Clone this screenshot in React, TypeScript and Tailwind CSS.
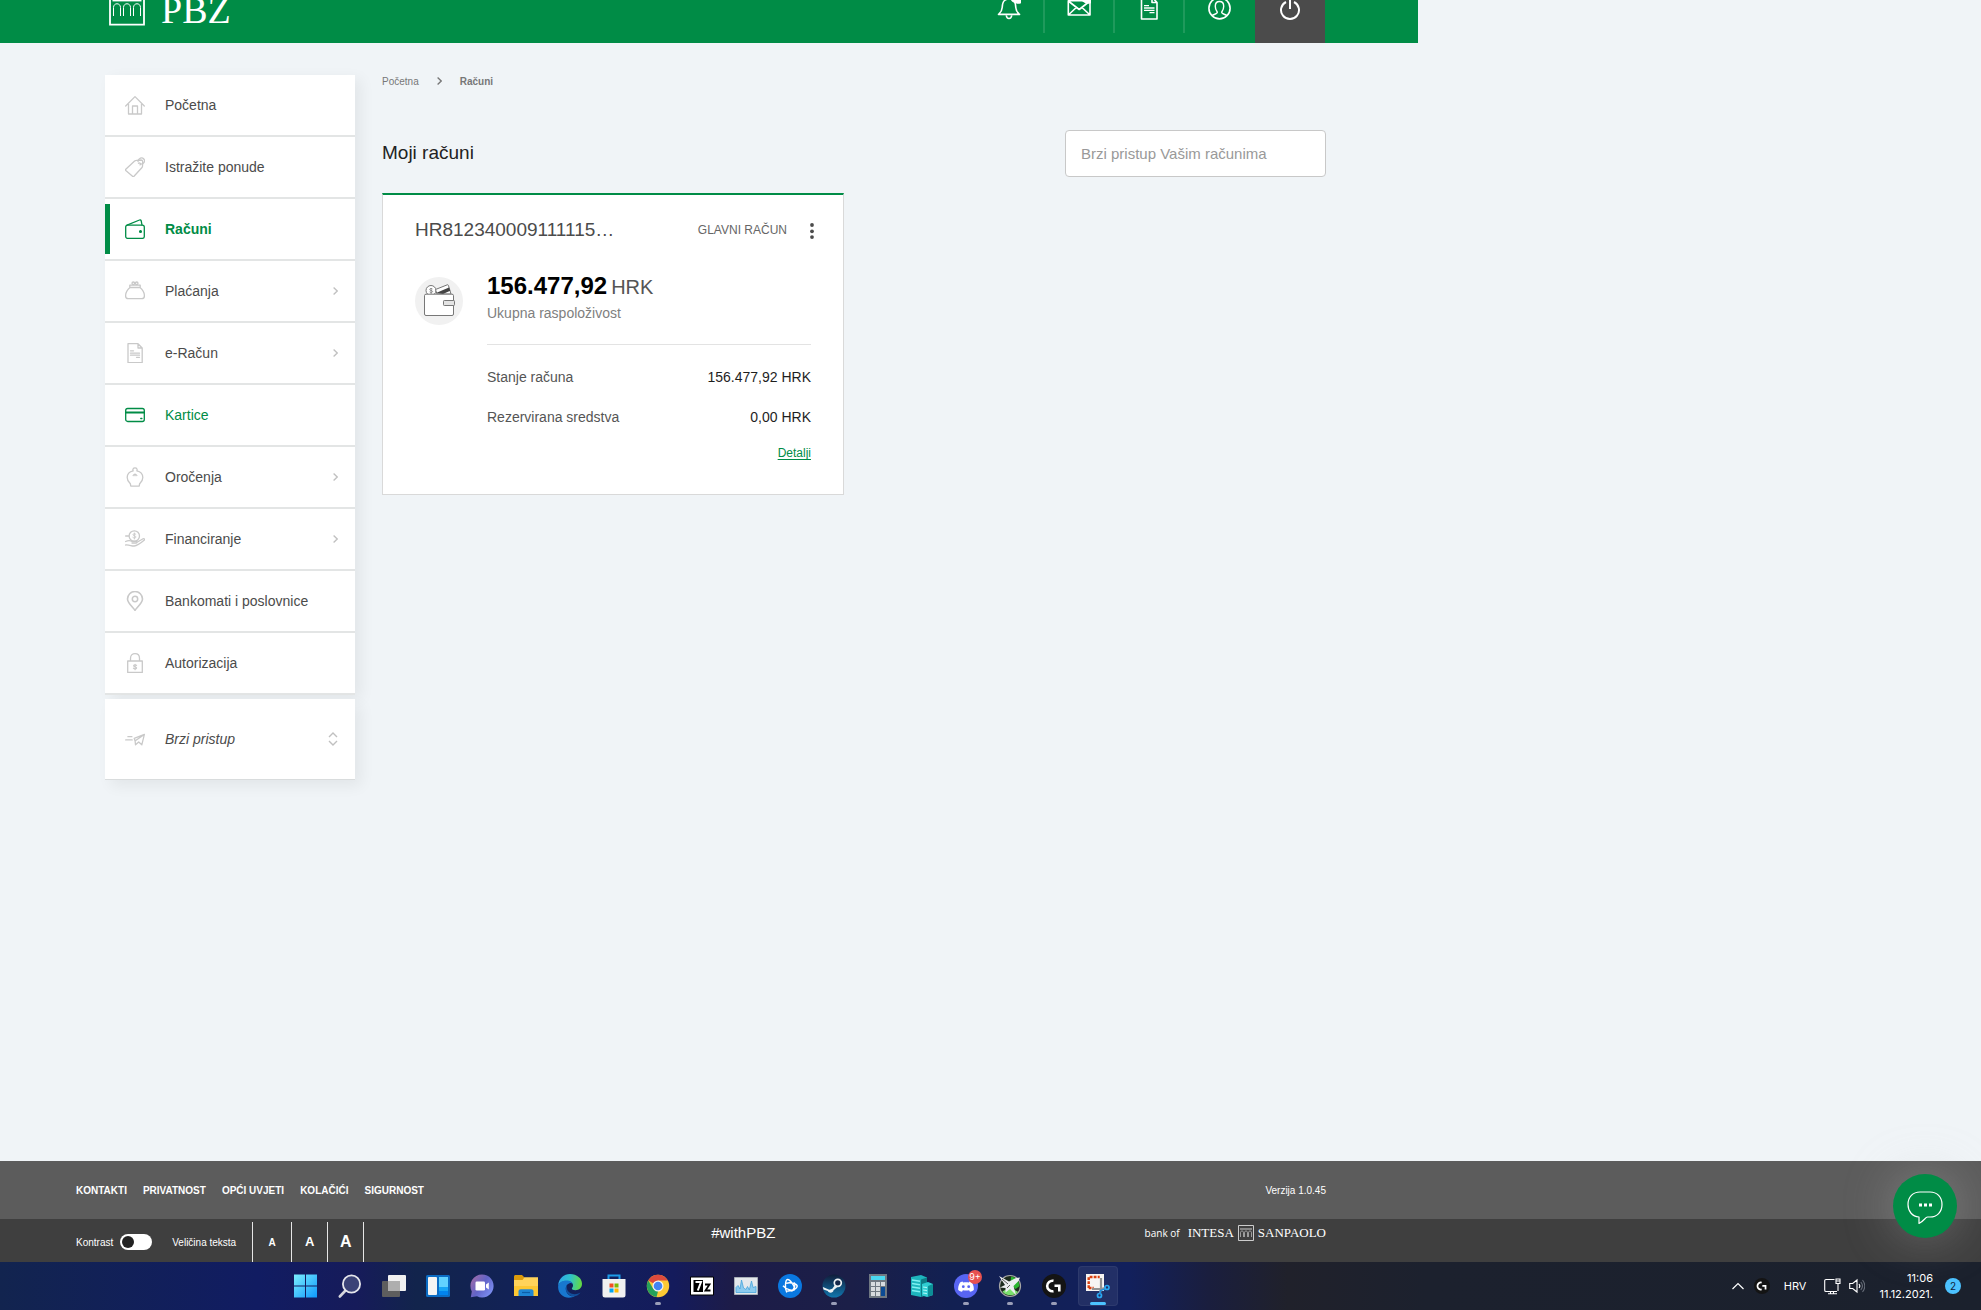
import type { ReactNode } from "react";
import { clsx } from "clsx";

/* ---------- Sidebar icons (20x20, stroke follows text colour) ---------- */

function LineIcon({ children }: { children: ReactNode }) {
  return (
    <svg
      viewBox="0 0 20 20"
      className="size-5 shrink-0"
      fill="none"
      stroke="currentColor"
      strokeWidth="1.3"
      strokeLinecap="round"
      strokeLinejoin="round"
      aria-hidden="true"
    >
      {children}
    </svg>
  );
}

const HomeIcon = (
  <LineIcon>
    <path d="M.7 11 10 1.6 19.3 11M3.5 9v10h13V9M7.5 19v-8h5v8" />
  </LineIcon>
);

const TagIcon = (
  <LineIcon>
    <path d="M.8 12.3 9.6 4c.5-.5 1-.7 1.700-.7l4.700-.3c.9 0 1.600.6 1.700 1.500l-.2 4.700c0 .6-.3 1.100-.7 1.500L9 19.200c-.5.5-1 .5-1.500 0L.8 13.500c-.4-.4-.4-.8 0-1.200z" />
    <path d="M13.500 6.200c1-.8 2.600.6 1.600 1.700M13 4.500C13.500 1 17 0 18.800 2s.2 5.500-3.600 5" />
  </LineIcon>
);

const WalletIcon = (
  <LineIcon>
    <rect x=".7" y="6.200" width="18.600" height="13.200" rx="2" />
    <path d="M2 6.200 14.500 1c.8-.3 1.400 0 1.700.8l.8 4.200" />
    <circle cx="15.500" cy="12.500" r=".9" fill="currentColor" />
  </LineIcon>
);

const PurseIcon = (
  <LineIcon>
    <path d="M5 6.500h10c2.500 2 4.400 5 4.400 8.500 0 1.800-.9 2.700-2.700 2.700H3.300c-1.800 0-2.700-.9-2.700-2.700C.6 11.500 2.500 8.500 5 6.500zM4.800 4.200h10.400v2.300H4.800z" />
    <circle cx="8.300" cy="2.300" r="1.300" />
    <circle cx="11.700" cy="2.300" r="1.300" />
  </LineIcon>
);

const DocumentIcon = (
  <LineIcon>
    <path d="M3 .7h10L17.200 5v14.600H3zM13 .7V5h4.200M5.500 7.800h3M5.500 10.200h9M5.500 12.200h9M11.500 14.300h3" />
  </LineIcon>
);

const CardIcon = (
  <LineIcon>
    <rect x=".7" y="3.500" width="18.600" height="13" rx="2" />
    <path d="M.7 7.500h18.600" strokeWidth="1.800" />
    <path d="M15.800 13.500h1" strokeWidth="1.500" />
  </LineIcon>
);

const PiggyIcon = (
  <LineIcon>
    <path d="M8.200 3.800c-.8-1-.2-3 1.800-3s2.600 2 1.800 3c3.800.8 6 3.500 6 6.700 0 3-1.600 4.500-2.800 5.800-.7.8-.5 1.700-.8 2.900H5.800c-.3-1.200-.1-2.100-.8-2.900-1.200-1.300-2.800-2.800-2.800-5.800 0-3.200 2.200-5.900 6-6.700z" />
    <path d="M8 8.300c.8-1.800 3.200-1.800 4 0z" fill="currentColor" strokeWidth=".8" />
  </LineIcon>
);

const LoanIcon = (
  <LineIcon>
    <circle cx="9.300" cy="7" r="5.200" />
    <path
      d="M10.800 5.200c-.9-.8-2.800-.6-2.800.5 0 1.400 3 .8 3 2.300 0 1.200-2.200 1.400-3.200.4M9.400 4v6"
      strokeWidth=".9"
    />
    <path d="M.6 7h3M.6 12.500c3-1.600 4.800-1 6.500-.2h4c1.300.1 1.300 1.700 0 1.700H7M12.500 13l5.600-3.200c1.200-.5 2 .6 1 1.500-3.300 2.800-6.800 5.500-9.900 5.700-2.800.2-4.700-1.400-8.600-1" />
  </LineIcon>
);

const PinIcon = (
  <LineIcon>
    <path
      d="M10 19.300C8.200 16.500 2.500 12 2.500 8a7.500 7.500 0 0 1 15 0c0 4-5.700 8.500-7.500 11.300z"
      strokeWidth="1.600"
    />
    <circle cx="10" cy="8" r="2.700" strokeWidth="1.500" />
  </LineIcon>
);

const LockIcon = (
  <LineIcon>
    <path d="M2.700 8h14.600v11.500H2.700zM5.500 8V5.200c0-6 9-6 9 0V8" />
    <path
      d="M11.600 12.300c-.8-.8-3-.7-3 .4 0 1.400 3 .8 3 2.200 0 1.200-2.300 1.300-3.200.3M10.100 11.200v5.500"
      strokeWidth="1.100"
    />
  </LineIcon>
);

const SendIcon = (
  <LineIcon>
    <path d="m9.200 9.300 10.200-4-2.600 10.500-3.100-2.800-3.200 2.800-.4-3.800zM19 5.600l-8.700 6.200M2.900 7.700h4M.7 10.900h6.500" />
  </LineIcon>
);

const NAV_ITEMS = [
  { label: "Početna", icon: HomeIcon },
  { label: "Istražite ponude", icon: TagIcon },
  { label: "Računi", icon: WalletIcon, active: true },
  { label: "Plaćanja", icon: PurseIcon, expandable: true },
  { label: "e-Račun", icon: DocumentIcon, expandable: true },
  { label: "Kartice", icon: CardIcon, hovered: true },
  { label: "Oročenja", icon: PiggyIcon, expandable: true },
  { label: "Financiranje", icon: LoanIcon, expandable: true },
  { label: "Bankomati i poslovnice", icon: PinIcon },
  { label: "Autorizacija", icon: LockIcon },
];

/* ---------- Top bar ---------- */

function TopIcon({ children }: { children: ReactNode }) {
  return (
    <svg
      viewBox="0 0 24 24"
      className="size-6"
      fill="none"
      stroke="#fff"
      strokeWidth="1.600"
      strokeLinejoin="round"
      aria-hidden="true"
    >
      {children}
    </svg>
  );
}

const TOP_ACTIONS = [
  {
    label: "Obavijesti",
    divider: true,
    icon: (
      <TopIcon>
        <path d="M1.500 14.400C3.500 12.600 5 11.500 5.200 7.500 5.400 2.500 6.500-1 12-1s6.600 3.500 6.800 8.500c.2 4 1.700 5.100 3.700 6.900zM9.300 15.500c.5 4 4.900 4 5.400 0" />
        <circle cx="20.800" cy="-4.200" r="8" fill="#fff" stroke="none" />
      </TopIcon>
    ),
  },
  {
    label: "Poruke",
    divider: true,
    icon: (
      <TopIcon>
        <path d="M1.300.800H23V15H1.300zM1.300 1l10.900 8.500L23 1M1.300 15l8-7.500M23 15l-8-7.500" />
        <circle cx="21.300" cy="-4.200" r="8" fill="#fff" stroke="none" />
      </TopIcon>
    ),
  },
  {
    label: "Dokumenti",
    divider: true,
    icon: (
      <TopIcon>
        <path d="M4.500-3H15l5 5.500V19H4.500zM15-3v5.500h5" />
        <path d="M7 5.600h5M7 8h10.500M7 10.300h10.500M12.500 12.600h5" strokeWidth="1.300" />
      </TopIcon>
    ),
  },
  {
    label: "Profil",
    divider: false,
    icon: (
      <TopIcon>
        <circle cx="12.500" cy="8.300" r="10.600" />
        <path
          d="M5 15.800c1.500-1.800 5.700-1.500 5.300-3.600-.2-1-2-2.500-2-6 0-3 1.700-4.700 4.200-4.700s4.200 1.700 4.200 4.700c0 3.500-1.800 5-2 6-.4 2.100 3.800 1.800 5.300 3.600"
          strokeWidth="1.400"
        />
      </TopIcon>
    ),
  },
];

function TopBar() {
  return (
    <header className="h-[43px] w-full max-w-[1418px] overflow-hidden bg-[#008c46]">
      <div className="ml-[105px] flex h-full max-w-[1220px] items-start justify-between">
        <a href="#" className="ml-1 flex gap-4" aria-label="PBZ">
          <svg viewBox="0 0 36 26" className="h-[26px] w-9" fill="none" stroke="#fff" aria-hidden="true">
            <path d="M1-4v28.700h34V-4" strokeWidth="1.800" />
            <path d="M3.500.600h29" strokeWidth="1.600" />
            <path
              d="M4.500 16V7.500c0-5 7-5 7 0V16M14.500 16V7.500c0-5 7-5 7 0V16M24.500 16V7.500c0-5 7-5 7 0V16"
              strokeWidth="1"
            />
          </svg>
          <span className="font-['Liberation_Serif',serif] text-[38px] leading-5 text-white">PBZ</span>
        </a>
        <div className="flex h-full">
          {TOP_ACTIONS.map((action) => (
            <button
              key={action.label}
              type="button"
              aria-label={action.label}
              className={clsx(
                "flex h-[33px] w-[70px] items-start justify-center border-r-2",
                action.divider ? "border-[#1f9a5c]" : "border-transparent"
              )}
            >
              {action.icon}
            </button>
          ))}
          <button
            type="button"
            aria-label="Odjava"
            className="flex h-full w-[70px] items-start justify-center bg-[#4b4b4b]"
          >
            <svg viewBox="0 0 24 24" className="size-6" fill="none" stroke="#fff" strokeWidth="2" aria-hidden="true">
              <path d="M8 2A9 9 0 1 0 16 2M12-2V9" />
            </svg>
          </button>
        </div>
      </div>
    </header>
  );
}

/* ---------- Sidebar ---------- */

function Sidebar() {
  return (
    <aside className="w-[250px] shrink-0 text-sm text-[#4b4b4b]">
      <nav className="shadow-[6px_4px_14px_rgba(0,0,0,0.06)]">
        <ul>
          {NAV_ITEMS.map((item) => (
            <li key={item.label} className="border-b-2 border-[#e3e5e5] bg-white">
              <a href="#" className="flex h-[60px] items-center pr-[17px]">
                <span className={clsx("mr-[15px] h-[50px] w-[5px]", item.active && "bg-[#008c46]")} />
                <span className={item.active || item.hovered ? "text-[#008c46]" : "text-[#c9c9c9]"}>
                  {item.icon}
                </span>
                <span
                  className={clsx(
                    "ml-5",
                    item.active && "font-bold",
                    (item.active || item.hovered) && "text-[#008c46]"
                  )}
                >
                  {item.label}
                </span>
                {item.expandable && (
                  <svg
                    viewBox="0 0 5 8"
                    className="ml-auto h-2 w-[5px]"
                    fill="none"
                    stroke="#c0c0c0"
                    strokeWidth="1.300"
                    aria-hidden="true"
                  >
                    <path d="m.6.500 3.600 3.500L.6 7.500" />
                  </svg>
                )}
              </a>
            </li>
          ))}
        </ul>
      </nav>
      <button
        type="button"
        className="mt-1 flex h-[81px] w-full items-center border-b border-[#d9dcdd] bg-white pr-[17px] pl-5 shadow-[6px_6px_14px_rgba(0,0,0,0.06)]"
      >
        <span className="text-[#c9c9c9]">{SendIcon}</span>
        <span className="ml-5 italic">Brzi pristup</span>
        <svg
          viewBox="0 0 10 14"
          className="ml-auto h-3.5 w-2.5"
          fill="none"
          stroke="#c0c0c0"
          strokeWidth="1.400"
          aria-hidden="true"
        >
          <path d="m1 5 4-4 4 4M1 9l4 4 4-4" />
        </svg>
      </button>
    </aside>
  );
}

/* ---------- Account card ---------- */

const BALANCES = [
  { label: "Stanje računa", value: "156.477,92 HRK" },
  { label: "Rezervirana sredstva", value: "0,00 HRK" },
];

function AccountCard() {
  return (
    <section className="mt-4 max-w-[462px] border border-t-2 border-[#d9d9d9] border-t-[#008c46] bg-white px-8 pt-[23px] pb-[33px]">
      <div className="flex h-6 items-center">
        <h2 className="text-[19px] text-[#4b4b4b]">HR812340009111115…</h2>
        <span className="ml-auto text-xs text-[#666]">GLAVNI RAČUN</span>
        <button type="button" aria-label="Opcije računa" className="-mr-[3px] ml-[23px]">
          <svg viewBox="0 0 4 18" className="h-[18px] w-1" fill="#4b4b4b" aria-hidden="true">
            <circle cx="2" cy="4" r="1.900" />
            <circle cx="2" cy="10.300" r="1.900" />
            <circle cx="2" cy="16.100" r="1.900" />
          </svg>
        </button>
      </div>

      <div className="mt-7 flex gap-6">
        <svg viewBox="0 0 48 48" className="mt-[7px] size-12 shrink-0" fill="none" aria-hidden="true">
          <circle cx="24" cy="24" r="24" fill="#f1f1f1" />
          <circle cx="16" cy="13.500" r="5" fill="#fff" stroke="#777" />
          <path
            d="M17.500 12c-.8-.8-2.800-.6-2.800.5 0 1.200 2.900.8 2.900 2 0 1.100-2.200 1.200-3 .3M16.100 11v6"
            stroke="#777"
            strokeWidth=".8"
          />
          <path d="m20.500 12.500 11.800-4.700c.6-.2.900 0 1.100.5L36 17H22z" fill="#fff" stroke="#777" />
          <path d="M21 16 34 10.500l1.200 3.200-7.200 3.300z" fill="#444" />
          <rect x="9.500" y="17.200" width="29" height="21.300" rx="1.500" fill="#fff" stroke="#777" />
          <rect x="28.500" y="23.500" width="11" height="5" rx=".8" fill="#e3e3e3" stroke="#777" />
        </svg>

        <div className="flex-1">
          <p className="text-2xl leading-8 font-bold text-black">
            156.477,92<span className="ml-1 text-xl leading-8 font-normal text-[#555]">HRK</span>
          </p>
          <p className="text-sm text-[#808080]">Ukupna raspoloživost</p>

          <dl className="mt-[21px] flex flex-col gap-5 border-t border-[#e3e3e3] pt-[22px] text-sm">
            {BALANCES.map((row) => (
              <div key={row.label} className="flex justify-between">
                <dt className="text-[#555]">{row.label}</dt>
                <dd className="text-[#1e1e1e]">{row.value}</dd>
              </div>
            ))}
          </dl>

          <div className="mt-[18px] text-right text-xs">
            <a href="#" className="text-[#008c46] underline underline-offset-2">
              Detalji
            </a>
          </div>
        </div>
      </div>
    </section>
  );
}

/* ---------- Footer ---------- */

const FOOTER_LINKS = ["KONTAKTI", "PRIVATNOST", "OPĆI UVJETI", "KOLAČIĆI", "SIGURNOST"];

function Footer() {
  return (
    <footer className="text-[10px] text-white">
      <div className="bg-[#5c5c5c]">
        <div className="ml-[76px] flex h-[58px] max-w-[1250px] items-center justify-between">
          <ul className="flex gap-4 font-bold">
            {FOOTER_LINKS.map((label) => (
              <li key={label}>
                <a href="#">{label}</a>
              </li>
            ))}
          </ul>
          <span>Verzija 1.0.45</span>
        </div>
      </div>
      <div className="bg-[#3f3f3f]">
        <div className="ml-[76px] flex h-[43px] max-w-[1250px]">
          <div className="flex items-center pt-[3px]">
            <label htmlFor="contrast">Kontrast</label>
            <input
              id="contrast"
              type="checkbox"
              role="switch"
              className="ml-[7px] h-4 w-8 appearance-none rounded-full bg-white before:m-0.5 before:block before:size-3 before:rounded-full before:bg-[#222]"
            />
            <span className="ml-5">Veličina teksta</span>
          </div>
          <div className="mt-[3px] ml-4 flex border-l border-[#e5e5e5] font-bold">
            <button type="button" aria-label="Mali tekst" className="w-[39px] border-r border-[#e5e5e5] text-[10px]">
              A
            </button>
            <button type="button" aria-label="Srednji tekst" className="w-9 border-r border-[#e5e5e5] text-[13px]">
              A
            </button>
            <button type="button" aria-label="Veliki tekst" className="w-9 border-r border-[#e5e5e5] text-base">
              A
            </button>
          </div>
          <span className="mt-1 ml-[347px] text-[15px] leading-5">#withPBZ</span>
          <div className="mt-1 ml-auto flex h-5 items-center font-['Liberation_Serif',serif] text-[13px]">
            <span className="mr-2 font-['Open_Sans',sans-serif] text-[10px]">bank of</span>
            <span>INTESA</span>
            <svg viewBox="0 0 16 16" className="mx-1 size-4" fill="none" stroke="#ddd" aria-hidden="true">
              <path d="M.5.500h15v15H.5zM2 4h12" strokeWidth=".9" />
              <path
                d="M2.500 12V7.500c0-2 3-2 3 0V12M6.500 12V7.500c0-2 3-2 3 0V12M10.500 12V7.500c0-2 3-2 3 0V12"
                strokeWidth=".6"
              />
            </svg>
            <span>SANPAOLO</span>
          </div>
        </div>
      </div>
    </footer>
  );
}

/* ---------- Taskbar ---------- */

function AppIcon({ children }: { children: ReactNode }) {
  return (
    <svg viewBox="0 0 24 24" className="size-6 overflow-visible" fill="none" aria-hidden="true">
      {children}
    </svg>
  );
}

const LogiMark = (
  <>
    <circle cx="12" cy="12" r="12" fill="#141414" />
    <path d="M11.500 6.800a5.300 5.300 0 1 0 0 10.400" stroke="#fff" strokeWidth="2.600" />
    <path d="M12.500 11.800h4.800v5.600" stroke="#fff" strokeWidth="2.600" />
  </>
);

const TASKBAR_APPS: { name: string; icon: ReactNode; running?: boolean; focused?: boolean }[] = [
  {
    name: "Start",
    icon: (
      <AppIcon>
        <defs>
          <linearGradient id="win" x1="0" y1="0" x2="24" y2="24" gradientUnits="userSpaceOnUse">
            <stop stopColor="#7df0ff" />
            <stop offset="1" stopColor="#0a95fb" />
          </linearGradient>
        </defs>
        <path d="M0 .500h11v11H0zM12 .500h11v11H12zM0 12.500h11v11H0zM12 12.500h11v11H12z" fill="url(#win)" />
      </AppIcon>
    ),
  },
  {
    name: "Pretraživanje",
    icon: (
      <AppIcon>
        <path d="m8 16-6.200 6.500" stroke="#d5d5dc" strokeWidth="2.600" strokeLinecap="round" />
        <circle cx="13.500" cy="10" r="8.600" fill="#3b4277" stroke="#e6e6ec" strokeWidth="1.800" />
      </AppIcon>
    ),
  },
  {
    name: "Prikaz zadataka",
    icon: (
      <AppIcon>
        <rect x="6" y="1" width="18" height="16" rx="1" fill="#f1f1f1" />
        <rect y="7" width="18" height="16" rx="1" fill="#5e5e5e" />
        <path d="M6 7h12v10H6z" fill="#aeaeae" />
      </AppIcon>
    ),
  },
  {
    name: "Widgeti",
    icon: (
      <AppIcon>
        <rect y="1" width="24" height="22" rx="1.500" fill="#0b6cc4" />
        <rect x="2" y="3" width="9" height="18" rx="1" fill="#f4f4f4" />
        <path d="M13 3h9v10h-9z" fill="#62d2ff" />
        <path d="M13 13h9v4h-9z" fill="#17a5f5" />
        <path d="M13 17h9v4h-9z" fill="#0284ee" />
      </AppIcon>
    ),
  },
  {
    name: "Chat",
    icon: (
      <AppIcon>
        <defs>
          <linearGradient id="chat" x1="2" y1="4" x2="22" y2="18" gradientUnits="userSpaceOnUse">
            <stop stopColor="#9a6aa9" />
            <stop offset=".5" stopColor="#6264c7" />
            <stop offset="1" stopColor="#7b8df0" />
          </linearGradient>
        </defs>
        <path d="M12 .500a11.500 11.500 0 1 1-5 21.800L.800 23.300l1-5.800A11.500 11.500 0 0 1 12 .500z" fill="url(#chat)" />
        <rect x="5.500" y="7.500" width="9.500" height="9" rx="1.300" fill="#fff" />
        <path d="m16 10.500 2.800-2v7l-2.800-2z" fill="#fff" />
      </AppIcon>
    ),
  },
  {
    name: "Eksplorer",
    icon: (
      <AppIcon>
        <path d="M0 2.500C0 1.700.7 1 1.500 1H8l2.500 2.500V8H0z" fill="#dc9a0a" />
        <path d="M0 6h8.500l2-2.800H24V22H0z" fill="#ffd35a" />
        <path d="M0 12h24v10H0z" fill="#fcc733" />
        <path d="M4.500 22v-4.500c0-1.400 1-2.300 2.300-2.300h10.400c1.300 0 2.300.9 2.300 2.300V22z" fill="#1f87d6" />
        <path d="M8 18.500h8" stroke="#0d5fa8" strokeWidth="1.200" />
      </AppIcon>
    ),
  },
  {
    name: "Edge",
    icon: (
      <AppIcon>
        <defs>
          <linearGradient id="edge" x1="1" y1="6" x2="23" y2="9" gradientUnits="userSpaceOnUse">
            <stop stopColor="#2ea8e8" />
            <stop offset=".5" stopColor="#2fc2c9" />
            <stop offset="1" stopColor="#62d947" />
          </linearGradient>
        </defs>
        <path
          d="M.2 11C.8 4.500 6 0 12 0c7 0 12 4.500 12 9.800 0 4-3 6.400-6.500 6.400-2.200 0-4-.9-3.600-2 .8-1 1.100-1.700 1.100-3C15 8.600 12 7 9 7 5 7 1 8.500.2 12z"
          fill="url(#edge)"
        />
        <path
          d="M.1 13C.1 8.500 4.500 6.500 8.500 6.500c3.500 0 6.500 2 6.500 4.700 0-1.700-1.800-2.500-3.400-2-3 1-4.300 4-3.500 7.200.9 3.600 4.300 7 9.100 5.400C10 26.700.1 22 .1 13z"
          fill="#1878cf"
        />
        <path
          d="M9 10.500c-3 4-.8 11.800 7 11.800 2.600 0 5-1.300 6.600-3.700-7 3.600-12.600.3-13.600-3.600-.4-1.700-.4-3.200 0-4.500z"
          fill="#124f9b"
        />
      </AppIcon>
    ),
  },
  {
    name: "Microsoft Store",
    icon: (
      <AppIcon>
        <path d="M6.500 5V1.500h11V5" stroke="#1d9be8" strokeWidth="2" />
        <path d="M.5 5h23v16a2.500 2.500 0 0 1-2.500 2.500H3A2.500 2.500 0 0 1 .5 21z" fill="#f0f0f0" />
        <path d="M7.500 9.500h4v4h-4z" fill="#f25022" />
        <path d="M12.500 9.500h4v4h-4z" fill="#7fba00" />
        <path d="M7.500 14.500h4v4h-4z" fill="#00a4ef" />
        <path d="M12.500 14.500h4v4h-4z" fill="#ffb900" />
      </AppIcon>
    ),
  },
  {
    name: "Chrome",
    running: true,
    icon: (
      <AppIcon>
        <circle cx="12" cy="12" r="11.200" fill="#fcc934" />
        <path d="M12 12 2.300 6.400A11.200 11.200 0 0 1 21.700 6.400H12z" fill="#dc4a3d" />
        <path d="M2.300 6.400 7.200 14.800l4.800 2.700-1.500 5.600A11.200 11.200 0 0 1 2.300 6.400z" fill="#25a15a" />
        <circle cx="12" cy="12" r="5.500" fill="#f4f4f4" />
        <circle cx="12" cy="12" r="4.300" fill="#4285f4" />
      </AppIcon>
    ),
  },
  {
    name: "7-Zip",
    icon: (
      <AppIcon>
        <path d="M.5 3h23v18H.5z" fill="#fff" stroke="#000" />
        <path d="M3.500 6h9.500v12H3.500z" fill="#000" />
        <path d="M5.500 8h5.500L7.800 16.500" stroke="#fff" strokeWidth="2" />
        <path d="M15 10.500h4.500L15.500 16.500h5" stroke="#000" strokeWidth="1.800" />
      </AppIcon>
    ),
  },
  {
    name: "Monitor resursa",
    icon: (
      <AppIcon>
        <path d="M.5 3.500h23v17H.5z" fill="#e4e8ec" stroke="#a9b0b8" />
        <path
          d="M2 18.500v-5l2-2 2 3.500L7.500 6l2 8 2.500 1.500 1.500-3 1.800 3.500L17.500 7l1.500 6.500 3-1v6z"
          fill="#8ccbef"
          stroke="#47a4dc"
          strokeWidth=".8"
        />
      </AppIcon>
    ),
  },
  {
    name: "Battle.net",
    icon: (
      <AppIcon>
        <circle cx="12" cy="12" r="12" fill="#0a78e0" />
        <path
          d="M8.800 18.500C6.500 14 7.300 5.800 9.500 5.500c2.500-.3 7.700 7.300 7 10-.5 1.800-8 .6-11.500-3.700M8.300 9.300c4-1.300 10.900.2 10.900 2.800 0 2.400-5.200 5.200-10 4.800M13.500 17.500c3-3 4.500-7.500 2.700-9"
          stroke="#fff"
          strokeWidth="1.400"
        />
      </AppIcon>
    ),
  },
  {
    name: "Steam",
    running: true,
    icon: (
      <AppIcon>
        <defs>
          <linearGradient id="steam" x1="12" y1="0" x2="12" y2="24" gradientUnits="userSpaceOnUse">
            <stop stopColor="#101b38" />
            <stop offset="1" stopColor="#1178b0" />
          </linearGradient>
        </defs>
        <circle cx="12" cy="12" r="11.500" fill="url(#steam)" />
        <path d="m.8 13 6.500 2.800 3-1 3.200-4.500 2.500 2.200-4.500 3.800c0 3-4.800 3.300-5.700.8L1.500 15.500z" fill="#eef2f5" />
        <circle cx="15.800" cy="8.800" r="3.500" fill="#15284a" stroke="#eef2f5" strokeWidth="1.700" />
      </AppIcon>
    ),
  },
  {
    name: "Kalkulator",
    icon: (
      <AppIcon>
        <path d="M3 0h18v24H3z" fill="#6f7882" />
        <path d="M5 2h14v4H5z" fill="#4ad8f0" />
        <path
          d="M5 8h4v4H5zM10 8h4v4h-4zM15 8h4v4h-4zM5 13h4v4H5zM10 13h4v4h-4zM5 18h4v4H5zM10 18h4v4h-4z"
          fill="#d7dbdf"
        />
        <path d="M15 13h4v9h-4z" fill="#0b4a94" />
      </AppIcon>
    ),
  },
  {
    name: "Poslužitelji",
    icon: (
      <AppIcon>
        <path d="m1 3 10-2 6 2.500V21l-6 2-10-2z" fill="#1eb5bd" />
        <path d="m11 5.500 6-2V21l-6 2z" fill="#0c7c86" />
        <path d="m2 6 8 1.200M2 9.500l8 1.200M2 13l8 1.200M2 16.500l8 1.200" stroke="#7ff0f2" strokeWidth="1.400" />
        <path d="m12 10 6-2 5 2v11l-6 2-5-1.500z" fill="#2fcdd2" />
        <path d="m18 12 5-2v11l-5 1.800z" fill="#0d8e96" />
        <path d="m13 13 4 .7M13 16l4 .7M13 19l4 .7" stroke="#a5f7f7" strokeWidth="1.200" />
      </AppIcon>
    ),
  },
  {
    name: "Discord",
    running: true,
    icon: (
      <AppIcon>
        <circle cx="12" cy="12" r="12" fill="#5865f2" />
        <path
          d="M8.500 7.500C7.500 7.700 6.500 8 6 8.500c-1.500 2.500-2 5-1.800 7.500 1.300 1 2.500 1.500 3.800 1.800l.9-1.600c2 .5 4.200.5 6.200 0l.9 1.600c1.300-.3 2.500-.8 3.800-1.800.2-2.500-.3-5-1.800-7.500-.5-.5-1.500-.8-2.500-1l-.7 1c-1.900-.3-3.700-.3-5.600 0z"
          fill="#fff"
        />
        <circle cx="9.300" cy="12.700" r="1.400" fill="#5865f2" />
        <circle cx="14.700" cy="12.700" r="1.400" fill="#5865f2" />
      </AppIcon>
    ),
  },
  {
    name: "Afterburner",
    running: true,
    icon: (
      <AppIcon>
        <circle cx="12" cy="12" r="10.500" fill="#1c2b1d" stroke="#a7a7a7" strokeWidth="1.200" />
        <path d="M13 2.500a9.500 9.500 0 0 1 8.500 9.500l-4 3-5-5z" fill="#2bb52f" />
        <path d="M4.500 17.500c3 5 12 5 15.500.5l-8-5z" fill="#7be06d" />
        <path d="m1 2 10 5.500L18 4l4-.500-1.500 3.500-5 5L18 21l-6-6-4.500 3.500V14L2 13.500l5-2.500z" fill="#eceef0" />
        <path d="m4 5 6 5M9 14l3-3" stroke="#5a5a5a" />
      </AppIcon>
    ),
  },
  { name: "Logitech G HUB", running: true, icon: <AppIcon>{LogiMark}</AppIcon> },
  {
    name: "Izrezivanje",
    focused: true,
    icon: (
      <AppIcon>
        <path d="M0 0h18v17H0z" fill="#f7f5f3" />
        <path d="M2.700 14V3h11" stroke="#d9400f" strokeWidth="2.400" strokeDasharray="2.800 1.200" />
        <path d="M2.700 14h5" stroke="#d9400f" strokeWidth="2.400" strokeDasharray="2.800 1" />
        <path d="M15 4v11H6M15 15l4-1M15 15l-1 4" stroke="#929292" strokeWidth="2.200" />
        <circle cx="21" cy="13.500" r="2" stroke="#2aa9f3" strokeWidth="1.700" />
        <circle cx="13.500" cy="21.500" r="2" stroke="#2aa9f3" strokeWidth="1.700" />
        <path d="m19 15-4.500 1.500L14 20" stroke="#1c8fdc" strokeWidth="1.500" />
      </AppIcon>
    ),
  },
];

function Taskbar() {
  return (
    <div className="flex h-12 items-center bg-[linear-gradient(90deg,#12244f,#111c62_13%,#161b5a_18%,#12244c_21%,#12215a_28%,#141b5c_34%,#1d1c48_37%,#1b1f48_43%,#122052_48%,#12205c_57%,#1a1e3e_61%,#20212b_65%,#1c212e_72%,#1b212d)] pr-5 pl-[286px] font-[Inter,sans-serif] text-white">
      <div className="flex gap-1">
        {TASKBAR_APPS.map((app) => (
          <button
            key={app.name}
            type="button"
            aria-label={app.name}
            className={clsx(
              "relative flex size-10 items-center justify-center rounded",
              app.focused && "border border-white/5 bg-white/7"
            )}
          >
            {app.icon}
            {app.name === "Discord" && (
              <span className="absolute top-1 right-1 flex size-3.5 items-center justify-center rounded-full bg-[#e8514f] text-[9px]">
                9+
              </span>
            )}
            {app.running && <span className="absolute bottom-px h-[3px] w-1.5 rounded-full bg-[#9a9eb8]" />}
            {app.focused && <span className="absolute bottom-0 h-[3px] w-4 rounded-full bg-[#4cc2ff]" />}
          </button>
        ))}
      </div>

      <div className="ml-auto flex items-center text-[11px]">
        <button type="button" aria-label="Skrivene ikone">
          <svg viewBox="0 0 12 8" className="h-2 w-3" fill="none" stroke="#fff" strokeWidth="1.200" aria-hidden="true">
            <path d="m.5 7 5.500-5.500L11.500 7" />
          </svg>
        </button>
        <svg viewBox="0 0 24 24" className="ml-2.5 size-4" fill="none" aria-hidden="true">
          {LogiMark}
        </svg>
        <span className="ml-3.5">HRV</span>
        <svg
          viewBox="0 0 17 17"
          className="ml-[18px] size-[17px]"
          fill="none"
          stroke="#fff"
          strokeWidth="1.100"
          aria-hidden="true"
        >
          <path d="M10.500 1.500H2C1.300 1.500.7 2 .7 2.800v9.400c0 .8.600 1.300 1.300 1.300h11M4 15.800h9M6.500 13.500v2.300M9.500 13.500v2.300" />
          <path d="M12 1h4v4.500h-4zM12 3h4M14 5.500V13" />
        </svg>
        <svg viewBox="0 0 16 16" className="ml-2 size-4" fill="none" stroke="#fff" strokeWidth="1.100" aria-hidden="true">
          <path d="M.7 5.500h3L8 2v12l-4.300-3.500h-3zM10 6c1 1.200 1 2.800 0 4" />
          <path d="M11.800 4c2 2.400 2 5.600 0 8M13.500 2c2.800 3.600 2.800 8.400 0 12" stroke="#666c78" />
        </svg>
        <div className="ml-3.5 text-right leading-4">
          <div>11:06</div>
          <div>11.12.2021.</div>
        </div>
        <span className="ml-3 flex size-4 items-center justify-center rounded-full bg-[#4cc2ff] text-[10px] text-[#10233a]">
          2
        </span>
      </div>
    </div>
  );
}

/* ---------- Page ---------- */

export default function App() {
  return (
    <div className="flex min-h-screen flex-col bg-[#f0f4f7] font-['Liberation_Sans',Arial,sans-serif]">
      <TopBar />

      <div className="ml-[105px] flex max-w-[1221px] flex-1 items-start gap-[27px] pt-8">
        <Sidebar />
        <main className="flex-1">
          <nav aria-label="Breadcrumb" className="flex h-3 items-center text-[10px] text-[#777]">
            <a href="#">Početna</a>
            <svg
              viewBox="0 0 5 8"
              className="mx-[18px] h-2 w-[5px]"
              fill="none"
              stroke="#777"
              strokeWidth="1.300"
              aria-hidden="true"
            >
              <path d="m.6.500 3.600 3.500L.6 7.500" />
            </svg>
            <span className="font-bold">Računi</span>
          </nav>

          <div className="mt-[43px] flex items-center justify-between">
            <h1 className="text-[19px] text-[#222]">Moji računi</h1>
            <input
              type="text"
              aria-label="Brzi pristup Vašim računima"
              placeholder="Brzi pristup Vašim računima"
              className="h-[47px] w-[261px] rounded border border-[#c8c8c8] bg-white px-[15px] text-[15px] placeholder:text-[#999]"
            />
          </div>

          <AccountCard />
        </main>
      </div>

      <Footer />
      <Taskbar />

      <button
        type="button"
        aria-label="Chat podrška"
        className="fixed right-6 bottom-[72px] flex size-16 items-center justify-center rounded-full bg-[#008c46] shadow-[0_0_50px_rgba(200,200,200,0.35)]"
      >
        <svg
          viewBox="0 0 36 34"
          className="mt-1 h-[34px] w-9"
          fill="none"
          stroke="#fff"
          strokeWidth="1.200"
          strokeLinejoin="round"
          aria-hidden="true"
        >
          <path d="M13 1h10c7 0 12 5 12 12.500S30 26 23 26h-2.500c-2 0-4 4.500-8.500 6.500V26C5 25.500 1 20 1 13.500 1 6 6 1 13 1z" />
          <path d="M12 14h3M17 14h3M22 14h3" strokeWidth="3" />
        </svg>
      </button>
    </div>
  );
}
